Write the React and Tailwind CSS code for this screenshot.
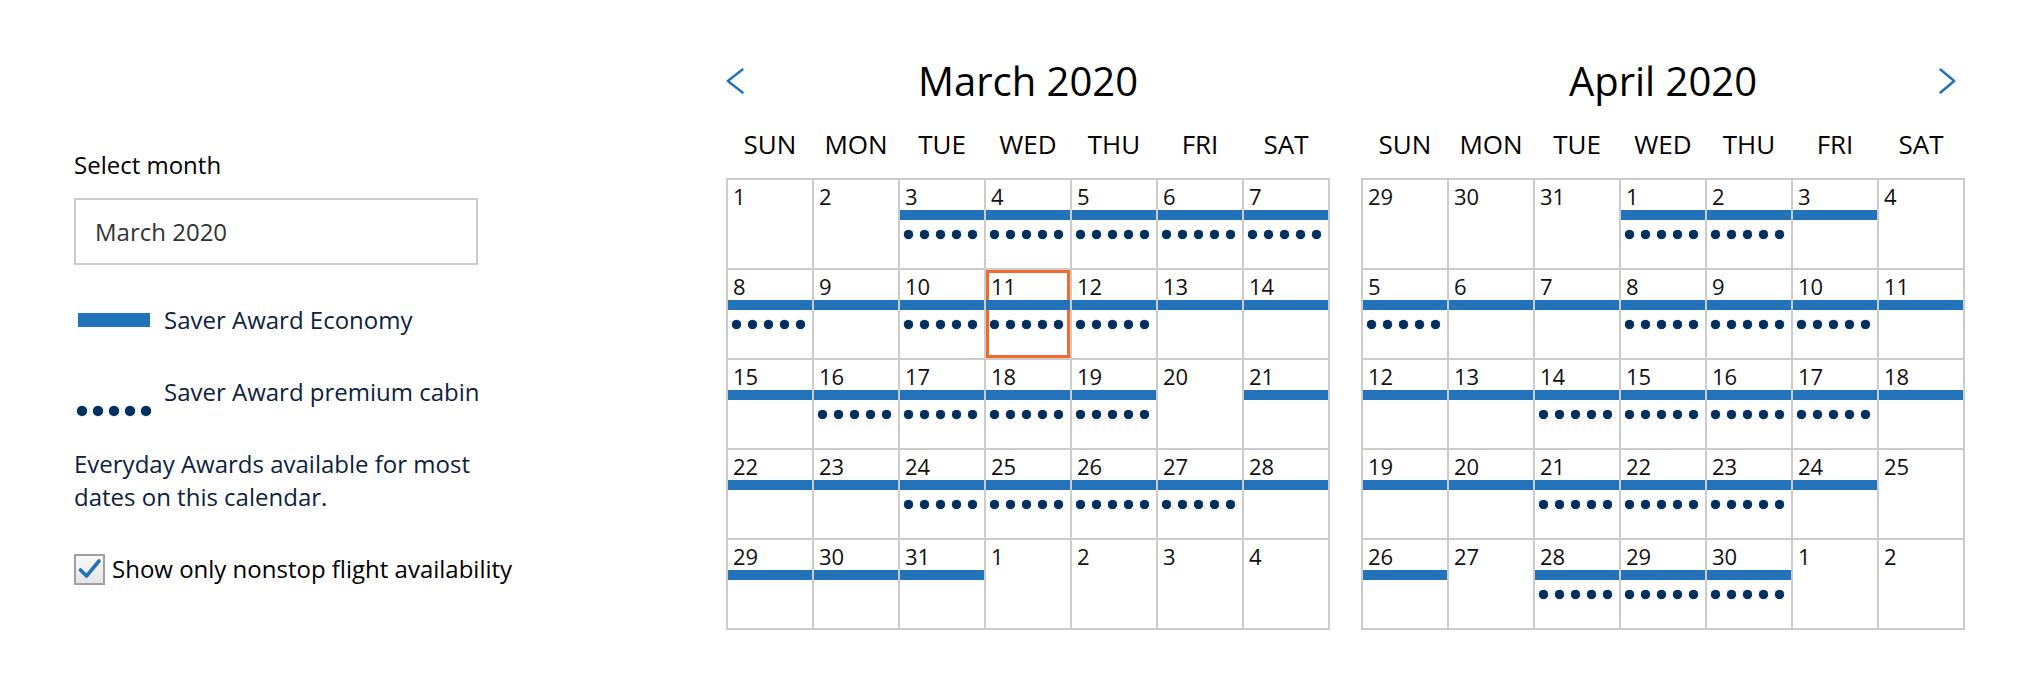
import React from "react";

const march = [
  [1, 0], [2, 0], [3, 2], [4, 2], [5, 2], [6, 2], [7, 2],
  [8, 2], [9, 1], [10, 2], [11, 2], [12, 2], [13, 1], [14, 1],
  [15, 1], [16, 2], [17, 2], [18, 2], [19, 2], [20, 0], [21, 1],
  [22, 1], [23, 1], [24, 2], [25, 2], [26, 2], [27, 2], [28, 1],
  [29, 1], [30, 1], [31, 1], [1, 0], [2, 0], [3, 0], [4, 0],
];

const april = [
  [29, 0], [30, 0], [31, 0], [1, 2], [2, 2], [3, 1], [4, 0],
  [5, 2], [6, 1], [7, 1], [8, 2], [9, 2], [10, 2], [11, 1],
  [12, 1], [13, 1], [14, 2], [15, 2], [16, 2], [17, 2], [18, 1],
  [19, 1], [20, 1], [21, 2], [22, 2], [23, 2], [24, 1], [25, 0],
  [26, 1], [27, 0], [28, 2], [29, 2], [30, 2], [1, 0], [2, 0],
];

const days = ["SUN", "MON", "TUE", "WED", "THU", "FRI", "SAT"];

function Dots({ size = "w-[9px] h-[9px]", gap = "gap-[7px]" }) {
  return (
    <div className={`flex ${gap}`}>
      {[0, 1, 2, 3, 4].map((i) => (
        <span key={i} className={`${size} rounded-full bg-[#00305c] shadow-[0_0_1px_#00305c]`} />
      ))}
    </div>
  );
}

function Cell({ day, level, selected }) {
  return (
    <div className="relative h-[90px] border border-[#cccccc] bg-white">
      {selected && <div className="absolute inset-0 border-[3px] border-[#f26b2c]" />}
      <div className="relative h-[30px] pl-[5px] pt-[2px] text-[22px] leading-[28px] text-[#111]">
        {day}
      </div>
      {level > 0 && <div className="relative h-[10px] bg-[#2373bb]" />}
      {level > 1 && (
        <div className="relative mt-[10px] pl-[4px]">
          <Dots />
        </div>
      )}
    </div>
  );
}

function Chevron({ dir }) {
  return (
    <svg width="26" height="26" viewBox="0 0 26 26" fill="none">
      <path
        d={dir === "left" ? "M16.5 1.5 L1.8 13 L16.5 24.5" : "M1.5 1.5 L15.2 13 L1.5 24.5"}
        stroke="#2373bb"
        strokeWidth="2.4"
        strokeLinecap="round"
        strokeLinejoin="round"
      />
    </svg>
  );
}

function Month({ title, data, left, right, selected }) {
  return (
    <div className="w-[604px]">
      <div className="grid grid-cols-[26px_1fr_26px] items-center">
        <div>{left && <Chevron dir="left" />}</div>
        <h2 className="h-[54px] text-center text-[40px] leading-[54px] text-black">{title}</h2>
        <div>{right && <Chevron dir="right" />}</div>
      </div>
      <div className="mt-[18px] grid grid-cols-7 px-[1px]">
        {days.map((d) => (
          <div key={d} className="text-center text-[26px] leading-[36px] text-black">
            {d}
          </div>
        ))}
      </div>
      <div className="mt-[16px] grid grid-cols-7 border border-[#cccccc]">
        {data.map(([day, level], i) => (
          <Cell key={i} day={day} level={level} selected={i === selected} />
        ))}
      </div>
    </div>
  );
}

export default function App() {
  return (
    <div className="flex h-[680px] bg-white pl-[74px] font-['Open_Sans',sans-serif]">
      <aside className="w-[404px] shrink-0 pt-[147px]">
        <p className="text-[24px] leading-[36px] text-black">Select month</p>
        <div className="mt-[15px] flex h-[67px] items-center border-2 border-[#cccccc] pl-[19px] text-[24px] leading-[36px] text-[#333]">
          March 2020
        </div>

        <div className="mt-[37px] flex items-center">
          <span className="ml-[4px] h-[14px] w-[72px] bg-[#2373bb]" />
          <span className="ml-[14px] whitespace-nowrap text-[24px] leading-[36px] text-[#0c2340]">
            Saver Award Economy
          </span>
        </div>

        <div className="mt-[36px] flex items-start">
          <div className="ml-[3px] mt-[32px] shrink-0">
            <Dots size="w-[10px] h-[10px]" gap="gap-[6px]" />
          </div>
          <span className="ml-[13px] whitespace-nowrap text-[24px] leading-[36px] text-[#0c2340]">
            Saver Award premium cabin
          </span>
        </div>

        <p className="mt-[31px] text-[24px] leading-[33px] text-[#0c2340]">
          Everyday Awards available for most dates on this calendar.
        </p>

        <label className="mt-[38px] flex items-center">
          <span className="flex h-[31px] w-[31px] shrink-0 items-center justify-center border-2 border-[#a0a0a0] bg-gradient-to-b from-[#fafafa] to-[#e4e4e4]">
            <svg width="24" height="22" viewBox="0 0 24 22" fill="none">
              <path d="M2.5 12 L8.5 18 L21 3" stroke="#2373bb" strokeWidth="3.6" strokeLinecap="round" strokeLinejoin="round" />
            </svg>
          </span>
          <span className="ml-[7px] whitespace-nowrap text-[24px] leading-[36px] text-black">
            Show only nonstop flight availability
          </span>
        </label>
      </aside>

      <div className="ml-[248px] flex gap-[31px] pt-[54px]">
        <Month title="March 2020" data={march} left selected={10} />
        <Month title="April 2020" data={april} right />
      </div>
    </div>
  );
}
